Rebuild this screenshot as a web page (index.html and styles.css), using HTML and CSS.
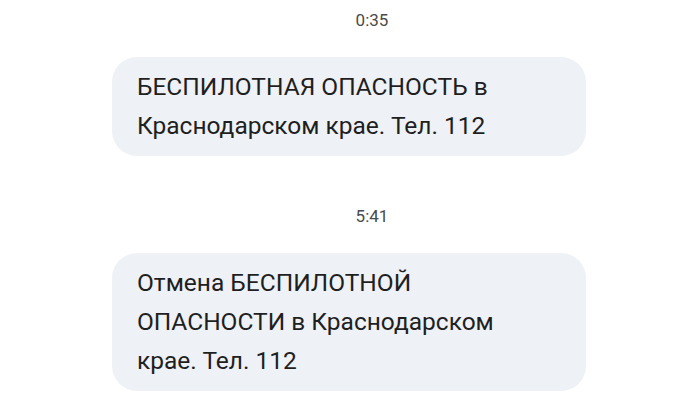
FILE: index.html
```html
<!DOCTYPE html>
<html lang="ru">
<head>
<meta charset="utf-8">
<link rel="stylesheet" href="styles.css">
</head>
<body>
<div class="chat">
  <div class="time">0:35</div>
  <div class="bubble">БЕСПИЛОТНАЯ ОПАСНОСТЬ в Краснодарском крае. Тел. 112</div>
  <div class="time time-gap">5:41</div>
  <div class="bubble">Отмена БЕСПИЛОТНОЙ ОПАСНОСТИ в Краснодарском крае. Тел. 112</div>
</div>
</body>
</html>
```
FILE: styles.css
```css
html, body {
  margin: 0;
  padding: 0;
  background: #ffffff;
}
body {
  font-family: Roboto, "Noto Sans", sans-serif;
  width: 688px;
  height: 400px;
  overflow: hidden;
}
.chat {
  width: 520px;
  margin-left: 112px;
  padding-top: 10px;
  display: flex;
  flex-direction: column;
  align-items: flex-start;
}
.time {
  align-self: stretch;
  text-align: center;
  font-size: 17px;
  line-height: 20px;
  color: #4a4a4a;
  margin-bottom: 27px;
}
.time-gap {
  margin-top: 50px;
  margin-bottom: 27px;
}
.bubble {
  box-sizing: border-box;
  width: 474px;
  padding: 10px 28px 11px 25px;
  background: #eef1f5;
  border-radius: 25px;
  font-size: 24.5px;
  line-height: 39px;
  color: #1f1f1f;
}
```
